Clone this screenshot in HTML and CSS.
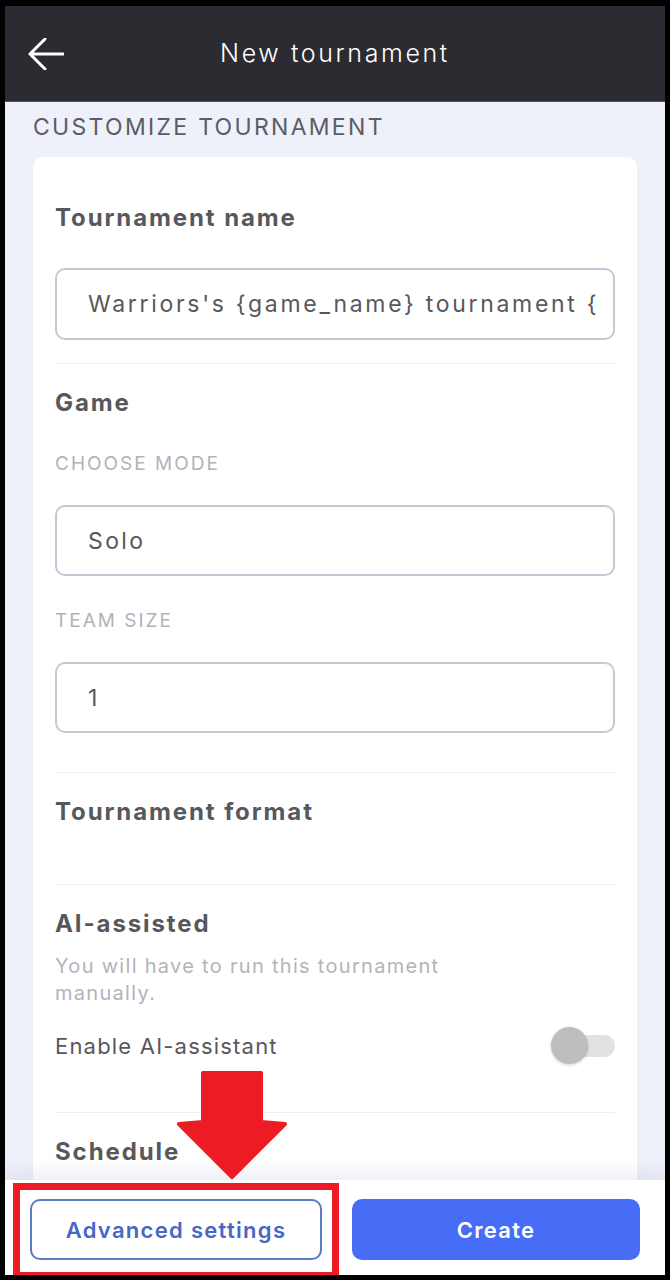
FILE: index.html
```html
<!DOCTYPE html>
<html lang="en">
<head>
    <meta charset="UTF-8">
    <meta name="viewport" content="width=device-width, initial-scale=1.0">
    <title>New tournament</title>
    <link rel="stylesheet" href="styles.css">
</head>
<body>
    <div class="screen">
        <header class="topbar">
            <svg class="back" width="36" height="32" viewBox="0 0 36 32">
                <path d="M35 16H2M17 1L2 16L17 31" fill="none" stroke="#fff" stroke-width="3" stroke-linecap="round" stroke-linejoin="round"/>
            </svg>
            <h1>New tournament</h1>
            <span></span>
        </header>

        <main class="content">
            <h2 class="page-title">CUSTOMIZE TOURNAMENT</h2>
            <div class="card">
                <section class="section first">
                    <h3>Tournament name</h3>
                    <div class="field name-field">Warriors's {game_name} tournament {</div>
                </section>

                <section class="section game">
                    <h3>Game</h3>
                    <div class="label">CHOOSE MODE</div>
                    <div class="field">Solo</div>
                    <div class="label">TEAM SIZE</div>
                    <div class="field">1</div>
                </section>

                <section class="section format">
                    <h3>Tournament format</h3>
                </section>

                <section class="section ai">
                    <h3>AI-assisted</h3>
                    <p class="hint">You will have to run this tournament manually.</p>
                    <div class="switch-row">
                        <span>Enable AI-assistant</span>
                        <div class="switch">
                            <div class="track"></div>
                            <div class="knob"></div>
                        </div>
                    </div>
                </section>

                <section class="section last">
                    <h3>Schedule</h3>
                </section>
            </div>
        </main>

        <footer class="actions">
            <button class="btn outline">Advanced settings</button>
            <button class="btn primary">Create</button>
        </footer>

        <!-- annotation -->
        <div class="mark-box"></div>
        <svg class="mark-arrow" width="112" height="112" viewBox="-3 -3 112 112">
            <polygon points="24,1 82,1 82,50 106,52 53,105 0,52 24,50" fill="#ed1c24" stroke="#ed1c24" stroke-width="4" stroke-linejoin="round"/>
        </svg>
    </div>
</body>
</html>
```

FILE: styles.css
```css
* {
    box-sizing: border-box;
}
body {
    margin: 0;
    width: 670px;
    height: 1280px;
    padding: 6px 5px 5px;
    background: #000;
    font-family: Inter, "Noto Sans", sans-serif;
    overflow: hidden;
}
.screen {
    position: relative;
    height: 100%;
    display: flex;
    flex-direction: column;
    overflow: hidden;
    background: #eef0fa;
}
.topbar {
    height: 96px;
    flex-shrink: 0;
    background: #2c2b31;
    border-bottom: 1px solid #55555c;
    display: grid;
    grid-template-columns: 1fr auto 1fr;
    align-items: center;
    padding: 0 23px;
}
.topbar h1 {
    margin: 0 0 2px;
    color: #fff;
    font-size: 25px;
    font-weight: 300;
    letter-spacing: 2.6px;
}
.back {
    display: block;
}
.content {
    flex: 1;
    overflow: hidden;
    padding: 11px 28px 0;
}
.page-title {
    margin: 0 0 16px;
    font-size: 23px;
    line-height: 28px;
    font-weight: 400;
    color: #5b5c64;
    letter-spacing: 2.3px;
}
.card {
    background: #fff;
    border-radius: 10px;
    padding: 22px 22px 0;
}
.section {
    padding: 25px 0 0;
    border-top: 1px solid #eeeef0;
}
.section.first {
    padding-bottom: 23px;
    border-top: none;
}
.section h3 {
    margin: 0;
    font-size: 24px;
    line-height: 28px;
    font-weight: 700;
    color: #58585c;
    letter-spacing: 1.9px;
}
.field {
    height: 71px;
    border: 2px solid #c6c8d8;
    border-radius: 10px;
    padding: 0 20px 0 31px;
    display: flex;
    align-items: center;
    font-size: 23px;
    color: #58585c;
    letter-spacing: 2.4px;
    white-space: nowrap;
    overflow: hidden;
}
.name-field {
    height: 72px;
    margin-top: 36px;
    letter-spacing: 2.7px;
}
.label {
    margin: 33px 0 29px;
    font-size: 19px;
    line-height: 24px;
    color: #b1b2ba;
    letter-spacing: 2px;
}
.game {
    padding-bottom: 39px;
}
.game .label:first-of-type {
    margin-top: 35px;
}
.format {
    padding-bottom: 58px;
}
.hint {
    margin: 15px 0 0;
    width: 440px;
    font-size: 20px;
    line-height: 27px;
    color: #b4b4b8;
    letter-spacing: 1.3px;
}
.ai {
    padding-bottom: 47px;
}
.switch-row {
    margin-top: 20px;
    height: 38px;
    display: flex;
    align-items: center;
    justify-content: space-between;
    font-size: 22px;
    color: #58585c;
    letter-spacing: 1.2px;
}
.switch {
    position: relative;
    width: 64px;
    height: 38px;
}
.track {
    position: absolute;
    right: 0;
    top: 8px;
    width: 47px;
    height: 22px;
    border-radius: 11px;
    background: #e2e2e4;
}
.knob {
    position: absolute;
    left: 0;
    top: 0;
    width: 37px;
    height: 37px;
    border-radius: 50%;
    background: #bdbdbf;
    box-shadow: 0 1px 3px rgba(0, 0, 0, 0.2);
}
.section.last {
    padding-bottom: 160px;
}
.actions {
    flex-shrink: 0;
    height: 95px;
    background: #fff;
    display: flex;
    gap: 30px;
    padding: 19px 25px 15px;
    box-shadow: 0 -6px 18px rgba(110, 120, 170, 0.14);
    position: relative;
}
.btn {
    flex: 1;
    height: 61px;
    border-radius: 10px;
    font-family: inherit;
    font-size: 22px;
    font-weight: 600;
    letter-spacing: 1.3px;
}
.outline {
    background: #fff;
    border: 2px solid #5b7bc9;
    color: #4866c6;
}
.primary {
    background: #476cf6;
    border: none;
    color: #fff;
}
.mark-box {
    position: absolute;
    left: 8px;
    top: 1177px;
    width: 326px;
    height: 96px;
    border: 7px solid #ed1c24;
}
.mark-arrow {
    position: absolute;
    left: 171px;
    top: 1063px;
}
```
